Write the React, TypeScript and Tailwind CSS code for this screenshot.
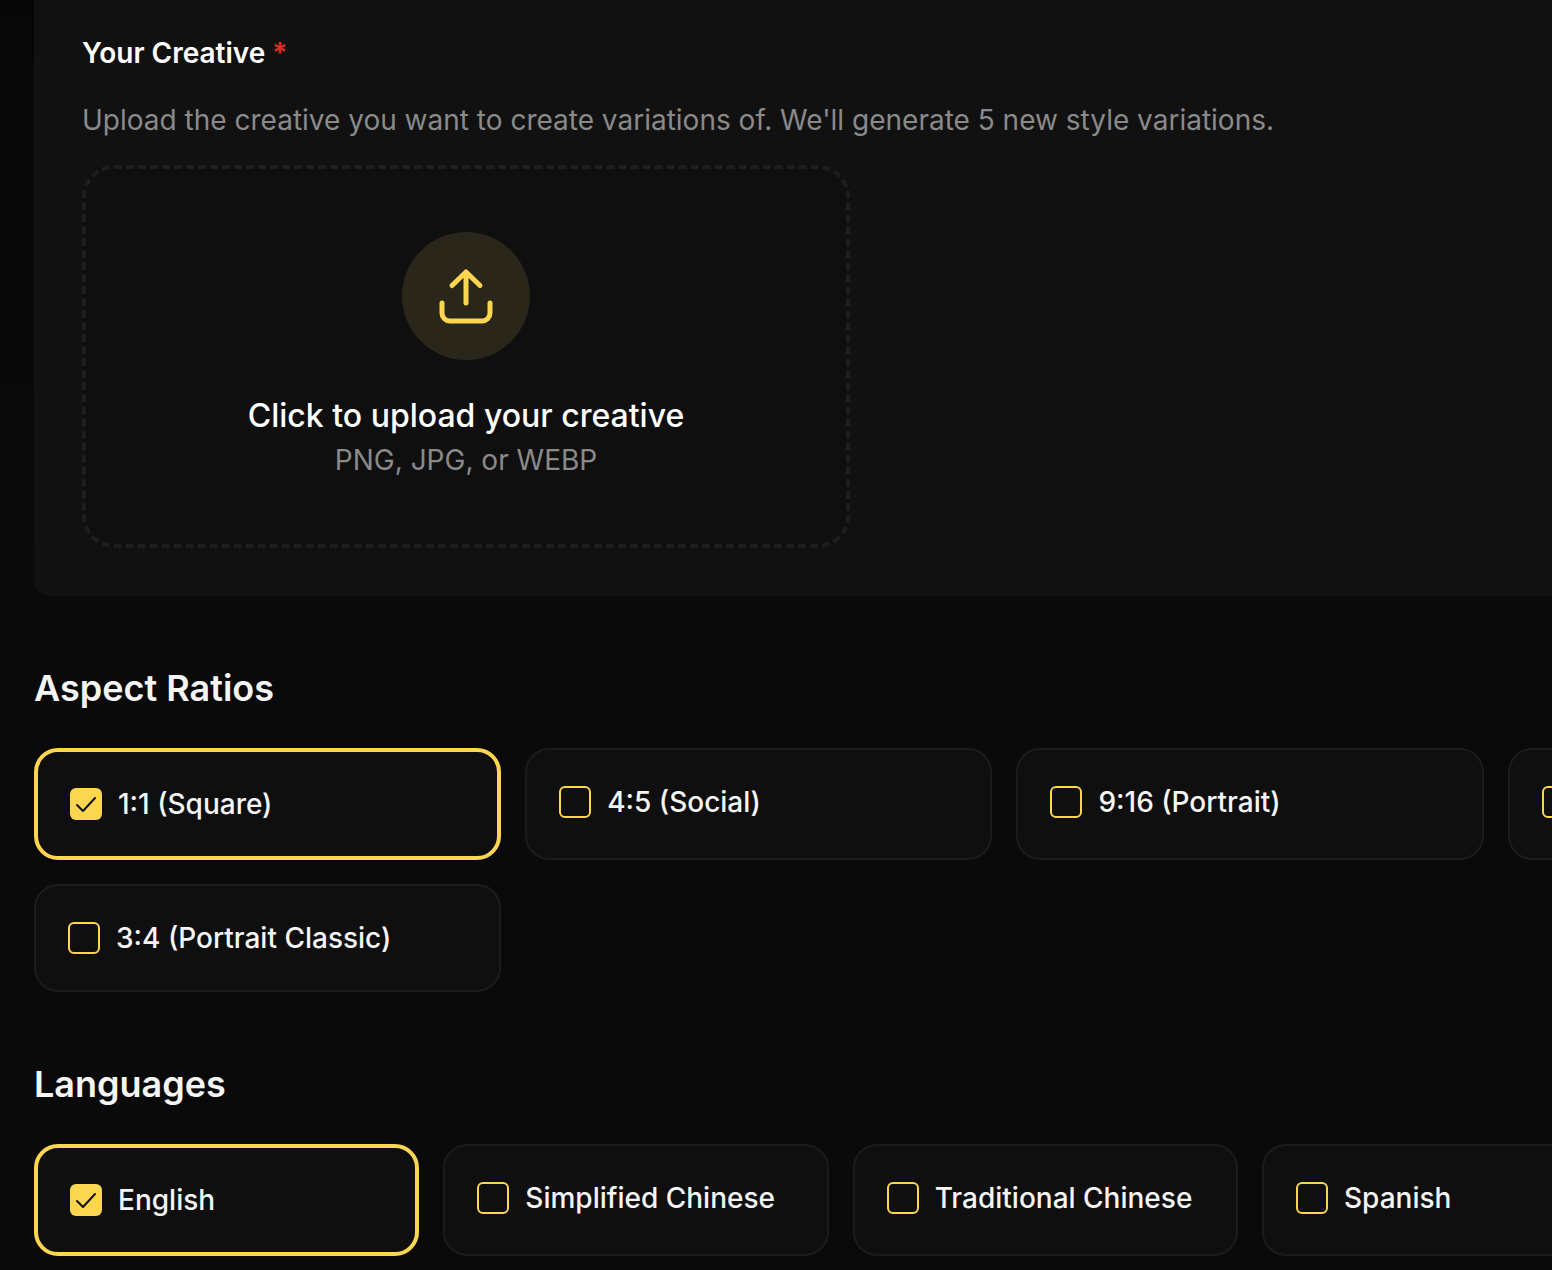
import React from "react";

function Check({ on }: { on: boolean }) {
  return on ? (
    <span className="flex size-8 shrink-0 items-center justify-center rounded-[6px] bg-[#fdd651]">
      <svg width="24" height="24" viewBox="0 0 24 24" fill="none" stroke="#111111" strokeWidth="2" strokeLinecap="round" strokeLinejoin="round">
        <path d="M3 13 L9 19 L21 6" />
      </svg>
    </span>
  ) : (
    <span className="size-8 shrink-0 rounded-[6px] border-2 border-[#fdd651]" />
  );
}

function Option({ label, on }: { label?: string; on?: boolean }) {
  return (
    <div className={`flex items-start gap-4 rounded-[24px] bg-[#0f0f0f] p-8 ${on ? "border-4 border-[#fdd651]" : "border-2 border-[#1c1c1c]"}`}>
      <span className="flex h-10 items-center">
        <Check on={!!on} />
      </span>
      {label ? <span className="whitespace-nowrap text-[28px] font-medium leading-10 text-[#f5f5f5]">{label}</span> : null}
    </div>
  );
}

export default function App() {
  return (
    <div className="h-[1270px] overflow-hidden bg-linear-to-b from-[#070707] to-[#0a0a0a] to-[45%] pl-[34px] font-['Inter',sans-serif]">
      <div className="w-[1940.8px]">
        <section className="rounded-b-[16px] bg-[#111111] px-12 pb-12 pt-[33px]">
          <h2 className="text-[28px] font-semibold leading-10 text-white">
            Your Creative <span className="text-[#dc2f23]">*</span>
          </h2>
          <p className="mt-[27px] text-[28px] leading-10 text-[#8a8a8a]">
            Upload the creative you want to create variations of. We'll generate 5 new style variations.
          </p>
          <div className="mt-[25px] flex w-[768px] flex-col items-center rounded-[32px] border-4 border-dashed border-[#1e1e1e] bg-[#0f0f0f] pb-16 pt-[63px]">
            <div className="flex size-32 items-center justify-center rounded-full bg-[#2a2619]">
              <svg width="64" height="64" viewBox="0 0 64 64" fill="none" stroke="#fdd651" strokeWidth="5" strokeLinecap="round" strokeLinejoin="round">
                <path d="M32 39 V8 M18 21.5 L32 8 L46 21.5" />
                <path d="M8 39 V49 A8 8 0 0 0 16 57 H48 A8 8 0 0 0 56 49 V39" />
              </svg>
            </div>
            <p className="mt-8 text-[32px] font-medium leading-[48px] text-white">Click to upload your creative</p>
            <p className="text-[28px] leading-10 text-[#8a8a8a]">PNG, JPG, or WEBP</p>
          </div>
        </section>

        <h2 className="mb-9 mt-[68px] text-[36px] font-semibold leading-[48px] text-[#f5f5f5]">Aspect Ratios</h2>
        <div className="grid grid-cols-4 gap-6">
          <Option label="1:1 (Square)" on />
          <Option label="4:5 (Social)" />
          <Option label="9:16 (Portrait)" />
          <Option />
          <Option label="3:4 (Portrait Classic)" />
        </div>

        <h2 className="mb-9 mt-[68px] text-[36px] font-semibold leading-[48px] text-[#f5f5f5]">Languages</h2>
        <div className="grid grid-cols-[repeat(5,385.33px)] gap-6">
          <Option label="English" on />
          <Option label="Simplified Chinese" />
          <Option label="Traditional Chinese" />
          <Option label="Spanish" />
        </div>
      </div>
    </div>
  );
}
